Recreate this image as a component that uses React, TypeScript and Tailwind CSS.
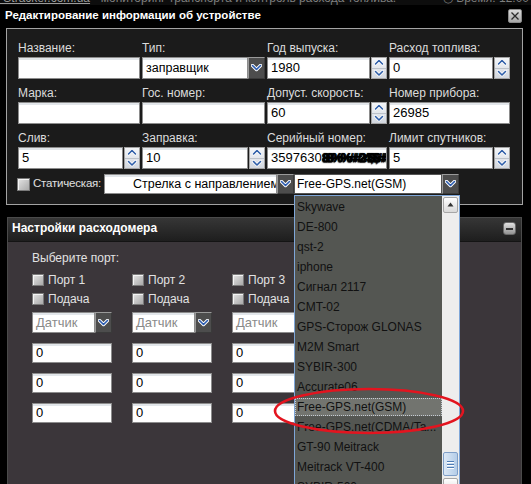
import React from "react";

const FONT = "font-['Liberation_Sans',Arial,sans-serif]";

function DownChev() {
  return (
    <svg width="11" height="8" viewBox="0 0 11 8">
      <polyline points="1.5,1.5 5.5,5.5 9.5,1.5" fill="none" stroke="#ffffff" strokeWidth="3.4" strokeLinecap="round" strokeLinejoin="round" />
      <polyline points="1.5,1.5 5.5,5.5 9.5,1.5" fill="none" stroke="#2a5bb0" strokeWidth="1.6" strokeLinecap="round" strokeLinejoin="round" />
    </svg>
  );
}

function SpinChev({ up }: { up?: boolean }) {
  const pts = up ? "1.5,5 5,1.5 8.5,5" : "1.5,1.5 5,5 8.5,1.5";
  return (
    <svg width="10" height="7" viewBox="0 0 10 7">
      <polyline points={pts} fill="none" stroke="#ffffff" strokeWidth="3" strokeLinecap="round" strokeLinejoin="round" />
      <polyline points={pts} fill="none" stroke="#2e5ea8" strokeWidth="1.6" strokeLinecap="round" strokeLinejoin="round" />
    </svg>
  );
}

function SelBtn() {
  return (
    <div className="w-[17px] h-full shrink-0 bg-[#4d4d4d] border border-t-[#9a9a9a] border-l-[#9a9a9a] border-r-[#3a3a3a] border-b-[#3a3a3a] flex items-center justify-center">
      <DownChev />
    </div>
  );
}

function Spinner() {
  return (
    <div className="w-[16px] h-full shrink-0 ml-[1px] border border-[#a4a4a4] bg-[linear-gradient(to_bottom,#f3f5f8,#d3d8df)] flex flex-col">
      <div className="flex-1 flex items-center justify-center border-b border-[#bcc2ca]">
        <SpinChev up />
      </div>
      <div className="flex-1 flex items-center justify-center">
        <SpinChev />
      </div>
    </div>
  );
}

const boxCls =
  "bg-white border border-[#8c8c8c] shadow-[inset_0_2px_0_#e2e6ea] text-black pl-[3px] overflow-hidden whitespace-nowrap flex items-center";

function Field({ label, children }: { label: string; children: React.ReactNode }) {
  return (
    <div className="flex flex-col">
      <div className="h-[14px] leading-[14px] text-[12px] text-[#dcdcdc] whitespace-nowrap mb-[2px]">{label}</div>
      <div className="h-[22px] flex">{children}</div>
    </div>
  );
}

function TextBox({ value }: { value?: string }) {
  return <div className={`${boxCls} flex-1 text-[13px]`}>{value}</div>;
}

function SpinBox({ value }: { value: string }) {
  return (
    <>
      <div className={`${boxCls} flex-1 text-[13px]`}>{value}</div>
      <Spinner />
    </>
  );
}

function Check({ size = 13 }: { size?: number }) {
  return (
    <div
      className={`${size === 13 ? "w-[13px] h-[13px]" : "w-[12px] h-[12px]"} shrink-0 border border-[#7a7a7a] bg-[linear-gradient(135deg,#e4e4e4,#a9a9a9)] shadow-[inset_1px_1px_0_#f4f4f4]`}
    />
  );
}

const items = [
  "Skywave",
  "DE-800",
  "qst-2",
  "iphone",
  "Сигнал 2117",
  "CMT-02",
  "GPS-Сторож GLONAS",
  "M2M Smart",
  "SYBIR-300",
  "Accurate06",
  "Free-GPS.net(GSM)",
  "Free-GPS.net(CDMA/Ta...",
  "GT-90 Meitrack",
  "Meitrack VT-400",
  "SYBIR-500",
];

function PortColumn({ n, showBtn }: { n: number; showBtn: boolean }) {
  return (
    <div className="flex flex-col w-[80px]">
      <div className="h-[19px] flex items-center">
        <Check size={12} />
        <span className="ml-[4px] text-[12px] text-[#e2e2e2]">Порт {n}</span>
      </div>
      <div className="h-[19px] flex items-center">
        <Check size={12} />
        <span className="ml-[4px] text-[12px] text-[#e2e2e2]">Подача</span>
      </div>
      <div className="mt-[4px] h-[21px] flex">
        <div className={`${boxCls} flex-1 text-[13px] !text-[#8a8a8a]`}>Датчик</div>
        {showBtn ? <SelBtn /> : <div className="w-[17px]" />}
      </div>
      <div className={`${boxCls} mt-[10px] h-[20px] text-[13px]`}>0</div>
      <div className={`${boxCls} mt-[10px] h-[20px] text-[13px]`}>0</div>
      <div className={`${boxCls} mt-[10px] h-[20px] text-[13px]`}>0</div>
    </div>
  );
}

export default function App() {
  return (
    <div className={`${FONT} relative w-[531px] h-[484px] overflow-hidden bg-black`}>
      {/* page strip behind dialog */}
      <div className="h-[5px] overflow-hidden bg-[#0d0d0d] text-[12px] leading-[14px] text-[#7e7e7e] whitespace-nowrap">
        <div className="-mt-[9px] flex">
          <span className="-ml-[14px] underline text-[#9a9a9a]">GPStracker.com.ua</span>
          <span>&nbsp;- мониторинг транспорта и контроль расхода топлива.</span>
          <span className="ml-auto pr-[2px]">◷ Время: 12:00</span>
        </div>
      </div>

      {/* title bar */}
      <div className="h-[23px] flex items-start justify-between pl-[5px] pr-[9px]">
        <div className="pt-[4px] text-[11.5px] leading-[13px] font-bold text-white whitespace-nowrap">
          Редактирование информации об устройстве
        </div>
        <div className="mt-[4px] w-[14px] h-[14px] bg-[linear-gradient(to_bottom,#dadada,#a9a9a9)] border border-[#8a8a8a] rounded-[2px] flex items-center justify-center">
          <svg width="10" height="10" viewBox="0 0 10 10">
            <path d="M1.5 1.5 L8.5 8.5 M8.5 1.5 L1.5 8.5" stroke="#2b2b2b" strokeWidth="1.3" />
          </svg>
        </div>
      </div>

      {/* form box */}
      <div className="ml-[6px] w-[517px] h-[177px] border border-[#a3a3a3] bg-[#1b1b1b] pl-[11px] pt-[12px]">
        <div className="grid grid-cols-[122px_123px_120px_121px] gap-x-[2px] gap-y-[7px]">
          <Field label="Название:">
            <TextBox />
          </Field>
          <Field label="Тип:">
            <div className={`${boxCls} flex-1 text-[12.5px]`}>заправщик</div>
            <SelBtn />
          </Field>
          <Field label="Год выпуска:">
            <SpinBox value="1980" />
          </Field>
          <Field label="Расход топлива:">
            <SpinBox value="0" />
          </Field>

          <Field label="Марка:">
            <TextBox />
          </Field>
          <Field label="Гос. номер:">
            <TextBox />
          </Field>
          <Field label="Допуст. скорость:">
            <SpinBox value="60" />
          </Field>
          <Field label="Номер прибора:">
            <TextBox value="26985" />
          </Field>

          <Field label="Слив:">
            <SpinBox value="5" />
          </Field>
          <Field label="Заправка:">
            <SpinBox value="10" />
          </Field>
          <Field label="Серийный номер:">
            <div className={`${boxCls} flex-1 text-[13px]`}>
              3597630
              <span className="font-bold tracking-[-2.5px] text-black [text-shadow:0_0_1px_#000,1px_0_0_#000,0_1px_1px_#222]">88%%##24$$##</span>
            </div>
          </Field>
          <Field label="Лимит спутников:">
            <SpinBox value="5" />
          </Field>
        </div>

        <div className="-ml-[1px] mt-[5px] h-[20px] flex items-center">
          <Check />
          <span className="ml-[3px] w-[69px] text-[11.5px] tracking-[-0.2px] text-[#e0e0e0] whitespace-nowrap">Статическая:</span>
          <div className="ml-[2px] h-[20px] flex">
            <div className={`${boxCls} w-[173px] text-[12.5px] !pl-[28px]`}>Стрелка с направлением</div>
            <SelBtn />
          </div>
          <div className="h-[20px] flex">
            <div className="w-[148px] bg-white border border-[#555] text-black text-[12px] pl-[2px] flex items-center whitespace-nowrap">
              Free-GPS.net(GSM)
            </div>
            <SelBtn />
          </div>
        </div>
      </div>

      {/* flowmeter panel */}
      <div className="mt-[12px] ml-[7px] w-[515px] border border-[#4a4a4a] border-b-0">
        <div className="h-[24px] bg-[linear-gradient(to_bottom,#363636,#1e1e1e)] border-b border-[#141414] flex items-start justify-between pl-[4px] pr-[5px]">
          <div className="pt-[3px] text-[12px] leading-[14px] font-bold text-white">Настройки расходомера</div>
          <div className="mt-[4px] w-[13px] h-[13px] rounded-[3px] border border-[#6a6a6a] bg-[linear-gradient(to_bottom,#e0e0e0,#939393)] flex items-center justify-center">
            <div className="w-[7px] h-[2px] bg-[#333]" />
          </div>
        </div>
        <div className="h-[260px] bg-[#3b363a] pl-[24px] pt-[9px]">
          <div className="h-[14px] leading-[14px] text-[12px] text-[#e2e2e2]">Выберите порт:</div>
          <div className="mt-[5px] flex gap-x-[20px]">
            <PortColumn n={1} showBtn />
            <PortColumn n={2} showBtn />
            <PortColumn n={3} showBtn={false} />
          </div>
        </div>
      </div>

      {/* dropdown list */}
      <div className="absolute left-[294px] top-[195px] w-[166px] h-[300px] border border-[#7ea6d8] flex">
        <div className="w-[147px] bg-[#545652] pt-[1px]">
          {items.map((it) => (
            <div key={it} className="h-[20px] flex items-center">
              {it === "Free-GPS.net(GSM)" ? (
                <div className="w-full h-[18px] bg-[#72746f] border border-dotted border-[#c6ccd4] pl-[1px] flex items-center text-[12px] text-[#111] whitespace-nowrap">
                  {it}
                </div>
              ) : (
                <div className="pl-[2px] text-[12px] text-[#111] whitespace-nowrap">{it}</div>
              )}
            </div>
          ))}
        </div>
        <div className="w-[17px] bg-[#ededed] flex flex-col items-center">
          <div className="mt-[1px] w-[15px] h-[16px] rounded-[2px] border border-[#a6a6a6] bg-[linear-gradient(to_bottom,#ffffff,#d9d9d9)] flex items-center justify-center">
            <svg width="7" height="5" viewBox="0 0 7 5">
              <polygon points="0.5,4.5 3.5,0.5 6.5,4.5" fill="#333" />
            </svg>
          </div>
          <div className="h-[240px]" />
          <div className="w-[15px] h-[24px] rounded-[2px] border border-[#7f9fc8] bg-[linear-gradient(to_right,#dbe8f6,#b5cde8)] flex flex-col items-center justify-center gap-[2px]">
            <div className="w-[7px] h-[1px] bg-[#4f7db6] shadow-[0_1px_0_#ffffff]" />
            <div className="w-[7px] h-[1px] bg-[#4f7db6] shadow-[0_1px_0_#ffffff]" />
            <div className="w-[7px] h-[1px] bg-[#4f7db6] shadow-[0_1px_0_#ffffff]" />
          </div>
          <div className="mt-[2px] w-[15px] h-[16px] rounded-[2px] border border-[#a6a6a6] bg-[linear-gradient(to_bottom,#ffffff,#d9d9d9)]" />
        </div>
      </div>

      {/* red annotation ellipse */}
      <svg className="absolute left-0 top-0 pointer-events-none" width="531" height="484" viewBox="0 0 531 484">
        <ellipse cx="369" cy="411" rx="94" ry="22" fill="none" stroke="#e3141f" strokeWidth="2.6" />
      </svg>
    </div>
  );
}
